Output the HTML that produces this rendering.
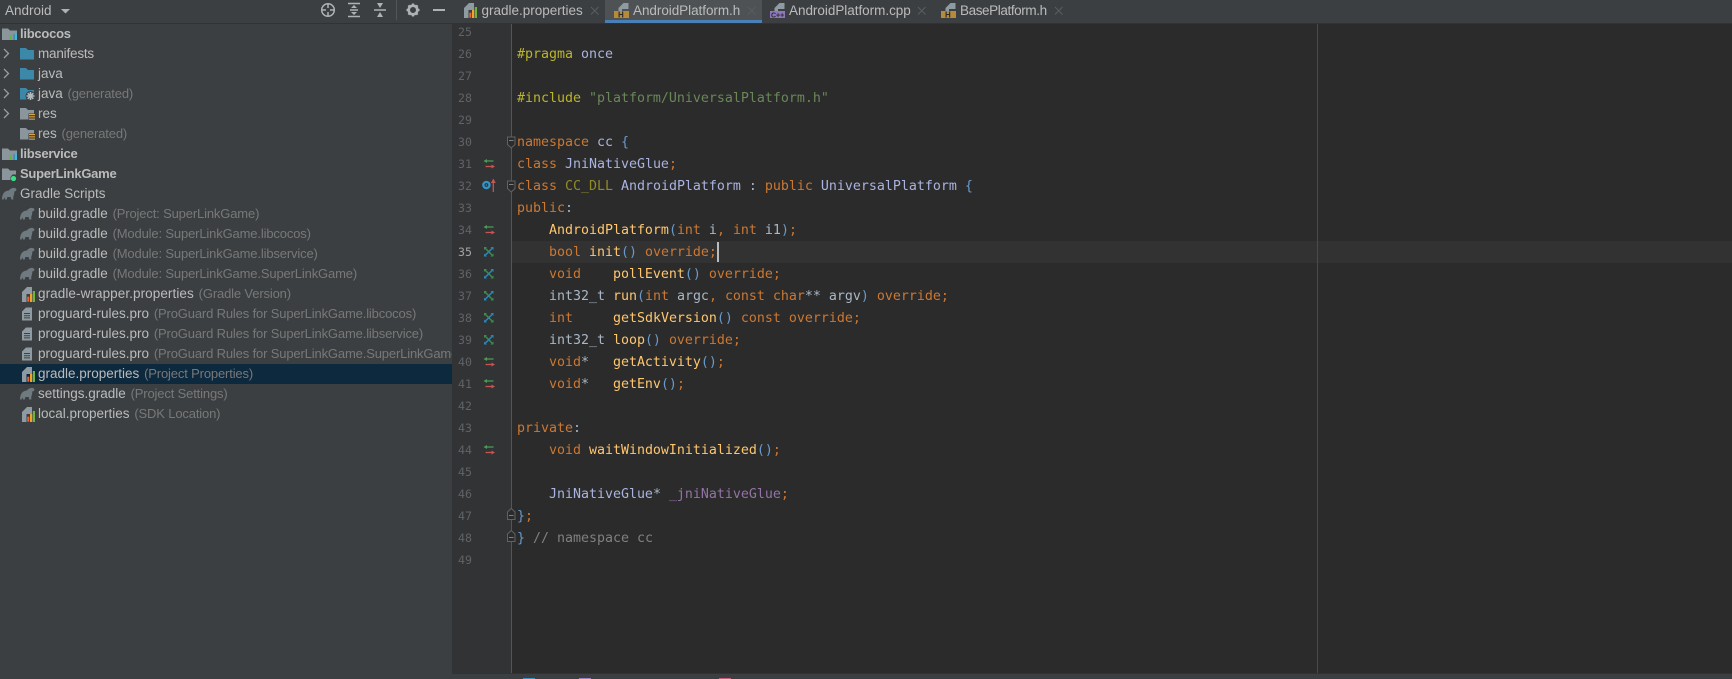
<!DOCTYPE html>
<html><head><meta charset="utf-8"><style>
html,body{margin:0;padding:0;width:1732px;height:679px;overflow:hidden;background:#2b2b2b}
.a{position:absolute;white-space:pre}
#side{position:absolute;left:0;top:0;width:452px;height:679px;background:#3c3f41;overflow:hidden}
#side .r{position:absolute;white-space:pre;height:20px;font:13.5px/20px "Liberation Sans",sans-serif;color:#bbb;transform:translateY(1px)}
#side .r i{font-style:normal;color:#787878;font-size:13px;letter-spacing:-.15px;margin-left:1px}
#side .r b{font-weight:bold;font-size:13px;letter-spacing:-.25px}
.tab{position:absolute;top:0;height:21px;font:13.5px/21px "Liberation Sans",sans-serif;color:#bbb;white-space:pre}
.n{position:absolute;left:452px;width:20px;text-align:right;height:22px;font:11.6px/22px "DejaVu Sans Mono",monospace;color:#606366}
.c{position:absolute;left:517px;white-space:pre;height:22px;font:13.29px/22px "DejaVu Sans Mono",monospace;color:#a9b7c6;transform:translateY(1px)}
.k{color:#cc7832}.f{color:#ffc66d}.t{color:#aab3e0}.p{color:#bbb529}.s{color:#6a8759}.m{color:#908b25}.b{color:#6a9acb}.v{color:#9373a5}.g{color:#808080}
</style></head><body>
<div class="a" style="left:452px;top:24px;width:60px;height:649px;background:#313335"></div>
<div class="a" style="left:512px;top:241px;width:1220px;height:22px;background:#323232"></div>
<div class="a" style="left:511px;top:24px;width:1px;height:649px;background:#555"></div>
<div class="a" style="left:1317px;top:24px;width:1px;height:649px;background:#4a4a4a"></div>
<div class="a" style="left:452px;top:0;width:1280px;height:23px;background:#3c3f41"></div>
<div class="a" style="left:452px;top:23px;width:1280px;height:1px;background:#323232"></div>
<div class="a" style="left:605px;top:0;width:157px;height:20px;background:#4e5254"></div>
<div class="a" style="left:605px;top:20px;width:157px;height:3px;background:#4a80b8"></div>
<div class="a" style="left:452px;top:673px;width:1280px;height:6px;background:#3c3f41;border-top:1px solid #323232;box-sizing:border-box"></div>
<div class="a" style="left:523px;top:678px;width:12px;height:1px;background:#3592c4"></div>
<div class="a" style="left:579px;top:678px;width:12px;height:1px;background:#9a7fc4"></div>
<div class="a" style="left:719px;top:678px;width:12px;height:1px;background:#c75a7e"></div>

<div class="tab" style="left:481.5px">gradle.properties</div>
<div class="tab" style="left:633px;letter-spacing:-.05px">AndroidPlatform.h</div>
<div class="tab" style="left:789px;letter-spacing:-.03px">AndroidPlatform.cpp</div>
<div class="tab" style="left:960px;letter-spacing:-.4px">BasePlatform.h</div>

<div id="side">
<div class="a" style="left:0;top:23px;width:452px;height:1px;background:#323232"></div>
<div class="a" style="left:0;top:364px;width:452px;height:20px;background:#0d293e"></div>
<div class="r" style="left:5px;top:0">Android</div>
<div class="r" style="left:20px;top:23px"><b>libcocos</b></div>
<div class="r" style="left:38px;top:43px;letter-spacing:-.2px">manifests</div>
<div class="r" style="left:38px;top:63px">java</div>
<div class="r" style="left:38px;top:83px">java <i>(generated)</i></div>
<div class="r" style="left:38px;top:103px">res</div>
<div class="r" style="left:38px;top:123px">res <i>(generated)</i></div>
<div class="r" style="left:20px;top:143px"><b>libservice</b></div>
<div class="r" style="left:20px;top:163px"><b>SuperLinkGame</b></div>
<div class="r" style="left:20px;top:183px">Gradle Scripts</div>
<div class="r" style="left:38px;top:203px">build.gradle <i>(Project: SuperLinkGame)</i></div>
<div class="r" style="left:38px;top:223px">build.gradle <i>(Module: SuperLinkGame.libcocos)</i></div>
<div class="r" style="left:38px;top:243px">build.gradle <i>(Module: SuperLinkGame.libservice)</i></div>
<div class="r" style="left:38px;top:263px">build.gradle <i>(Module: SuperLinkGame.SuperLinkGame)</i></div>
<div class="r" style="left:38px;top:283px;letter-spacing:.08px">gradle-wrapper.properties <i>(Gradle Version)</i></div>
<div class="r" style="left:38px;top:303px">proguard-rules.pro <i>(ProGuard Rules for SuperLinkGame.libcocos)</i></div>
<div class="r" style="left:38px;top:323px">proguard-rules.pro <i>(ProGuard Rules for SuperLinkGame.libservice)</i></div>
<div class="r" style="left:38px;top:343px">proguard-rules.pro <i>(ProGuard Rules for SuperLinkGame.SuperLinkGame)</i></div>
<div class="r" style="left:38px;top:363px">gradle.properties <i>(Project Properties)</i></div>
<div class="r" style="left:38px;top:383px">settings.gradle <i>(Project Settings)</i></div>
<div class="r" style="left:38px;top:403px">local.properties <i>(SDK Location)</i></div>
</div>

<div class="n" style="top:21px">25</div><div class="n" style="top:43px">26</div><div class="n" style="top:65px">27</div><div class="n" style="top:87px">28</div><div class="n" style="top:109px">29</div><div class="n" style="top:131px">30</div><div class="n" style="top:153px">31</div><div class="n" style="top:175px">32</div><div class="n" style="top:197px">33</div><div class="n" style="top:219px">34</div><div class="n" style="top:241px;color:#a4a3a3">35</div><div class="n" style="top:263px">36</div><div class="n" style="top:285px">37</div><div class="n" style="top:307px">38</div><div class="n" style="top:329px">39</div><div class="n" style="top:351px">40</div><div class="n" style="top:373px">41</div><div class="n" style="top:395px">42</div><div class="n" style="top:417px">43</div><div class="n" style="top:439px">44</div><div class="n" style="top:461px">45</div><div class="n" style="top:483px">46</div><div class="n" style="top:505px">47</div><div class="n" style="top:527px">48</div><div class="n" style="top:549px">49</div>

<div class="c" style="top:43px"><span class="p">#pragma</span> <span class="t">once</span></div>
<div class="c" style="top:87px"><span class="p">#include</span> <span class="s">"platform/UniversalPlatform.h"</span></div>
<div class="c" style="top:131px"><span class="k">namespace</span> <span class="t">cc</span> <span class="b">{</span></div>
<div class="c" style="top:153px"><span class="k">class</span> <span class="t">JniNativeGlue</span><span class="k">;</span></div>
<div class="c" style="top:175px"><span class="k">class</span> <span class="m">CC_DLL</span> <span class="t">AndroidPlatform</span> : <span class="k">public</span> <span class="t">UniversalPlatform</span> <span class="b">{</span></div>
<div class="c" style="top:197px"><span class="k">public</span>:</div>
<div class="c" style="top:219px">    <span class="f">AndroidPlatform</span><span class="b">(</span><span class="k">int</span> i<span class="k">,</span> <span class="k">int</span> i1<span class="b">)</span><span class="k">;</span></div>
<div class="c" style="top:241px">    <span class="k">bool</span> <span class="f">init</span><span class="b">()</span> <span class="k">override;</span></div>
<div class="c" style="top:263px">    <span class="k">void</span>    <span class="f">pollEvent</span><span class="b">()</span> <span class="k">override;</span></div>
<div class="c" style="top:285px">    int32_t <span class="f">run</span><span class="b">(</span><span class="k">int</span> argc<span class="k">,</span> <span class="k">const char</span>** argv<span class="b">)</span> <span class="k">override;</span></div>
<div class="c" style="top:307px">    <span class="k">int</span>     <span class="f">getSdkVersion</span><span class="b">()</span> <span class="k">const override;</span></div>
<div class="c" style="top:329px">    int32_t <span class="f">loop</span><span class="b">()</span> <span class="k">override;</span></div>
<div class="c" style="top:351px">    <span class="k">void</span>*   <span class="f">getActivity</span><span class="b">()</span><span class="k">;</span></div>
<div class="c" style="top:373px">    <span class="k">void</span>*   <span class="f">getEnv</span><span class="b">()</span><span class="k">;</span></div>
<div class="c" style="top:417px"><span class="k">private</span>:</div>
<div class="c" style="top:439px">    <span class="k">void</span> <span class="f">waitWindowInitialized</span><span class="b">()</span><span class="k">;</span></div>
<div class="c" style="top:483px">    <span class="t">JniNativeGlue</span>* <span class="v">_jniNativeGlue</span><span class="k">;</span></div>
<div class="c" style="top:505px"><span class="b">}</span><span class="k">;</span></div>
<div class="c" style="top:527px"><span class="b">}</span> <span class="g">// namespace cc</span></div>
<div class="a" style="left:717px;top:242px;width:2px;height:20px;background:#bbb"></div>

<svg class="a" style="left:0;top:0" width="1732" height="679" viewBox="0 0 1732 679" xmlns="http://www.w3.org/2000/svg">
<defs>
<g id="module"><path d="M0 0h6l2 2h7v4.500h-1V5.500h-2.600V11.500H0z" fill="#8a959c"/><rect x="7" y="6.500" width="2.300" height="5" fill="#62b543"/><rect x="9.800" y="3.500" width="2" height="8" fill="#8a959c"/><rect x="12.300" y="5.500" width="2.700" height="6" fill="#40b6e0"/></g>
<path id="folderB" d="M0 0h6l2 2h6v9.500H0z" fill="#3c88a8"/>
<path id="folderG" d="M0 0h6l2 2h6v3.500H8.500V11.500H0z" fill="#8a959c"/>
<g id="lines"><rect width="6" height="1.100" y="0" fill="#d9a441"/><rect width="6" height="1.100" y="2.300" fill="#d9a441"/><rect width="6" height="1.100" y="4.600" fill="#d9a441"/></g>
<path id="chev" d="M0 0L4.500 4.500L0 9" fill="none" stroke="#9a9da0" stroke-width="1.300"/>
<path id="ele" d="M0 12.500C0 6.500 3 3.500 7 3.500C8 1.500 11 .5 13 1C15 1.800 14.700 4 13 4.300L12.300 4.500C12.300 7 11.800 8.500 11.300 9.500L11.300 12.500H9.300L8.700 10H5.300L4.800 12.500H3L2.800 10.500C2 10.800 2 11.800 1.500 12.500Z" fill="#6e7a80"/>
<g id="prop"><path d="M5 0H10V7H4.500V15H0V5Z" fill="#8f9ba3"/><rect x="5.300" y="9.700" width="2" height="5" fill="#e8663a"/><rect x="8" y="7" width="2.200" height="8" fill="#f2a32e"/><rect x="10.800" y="4" width="2.200" height="11" fill="#6eb440"/></g>
<g id="doc"><path d="M4 0h6v13H0V4z" fill="#8f9ba3"/><path d="M2 6h6M2 8.200h6M2 10.400h6" stroke="#3c3f41" stroke-width="1"/></g>
<g id="chg"><path d="M3 2H10" stroke="#499c54" stroke-width="1.300"/><path d="M0 2L3.500 0V4Z" fill="#499c54"/><path d="M2 7.500H8.500" stroke="#c75450" stroke-width="1.300"/><path d="M11.500 7.500L8 5.500V9.500Z" fill="#c75450"/></g>
<g id="impl"><path d="M.5 .5L9 9" stroke="#3e8b4f" stroke-width="1.500"/><path d="M9 .5L.5 9" stroke="#2f86b5" stroke-width="1.500"/><path d="M0 0h3L0 3z" fill="#3e8b4f"/><path d="M9.500 9.500h-3l3-3z" fill="#3e8b4f"/><path d="M9.500 0v3l-3-3zM0 9.500v-3l3 3z" fill="#2f86b5"/></g>
<g id="foldD"><path d="M.5 .5H8V8L4.250 11.500L.5 8Z" fill="#2b2b2b" stroke="#606366"/><path d="M2 4H6.500" stroke="#808080"/></g>
<g id="foldU"><path d="M.5 11.500H8V4L4.250 .5L.5 4Z" fill="#2b2b2b" stroke="#606366"/><path d="M2 7.500H6.500" stroke="#808080"/></g>
<path id="x" d="M0 0L7.500 7.500M7.500 0L0 7.500" stroke="#5a5d5f" stroke-width="1" fill="none"/>
<g id="hdr"><path d="M5 0H10V6H3.500V8H0V5Z" fill="#8f9ba3" transform="translate(2.500,0)"/></g>
</defs>

<!-- toolbar -->
<path d="M57 9h9l-4.500 4.500z" fill="#afb1b3" transform="translate(4,0)"/>
<g fill="none" stroke="#afb1b3">
<circle cx="328" cy="10" r="6.300" stroke-width="1.500"/>
<path d="M328 4.500V8M328 12V15.500M322.500 10H326M330 10H333.500" stroke-width="1.500"/>
<path d="M348 3.500H360M348 16.500H360M350 10H358" stroke-width="1.500"/>
<path d="M374 10H386" stroke-width="1.500"/>
<path d="M433 10H445" stroke-width="2"/>
</g>
<g fill="#afb1b3">
<path d="M354 5L351 8H357ZM354 15L351 12H357Z"/>
<path d="M380 8L377 3H383ZM380 12L377 17H383Z"/>
</g>
<rect x="396" y="0" width="1" height="20" fill="#515658"/>
<circle cx="413" cy="10" r="4.300" fill="none" stroke="#afb1b3" stroke-width="2.600"/>
<path d="M413 3.500V16.500M406.500 10H419.500M408.400 5.400L417.600 14.600M417.600 5.400L408.400 14.600" stroke="#afb1b3" stroke-width="2.200" stroke-dasharray="2 9"/>

<!-- tree icons -->
<use href="#module" x="2" y="28.500"/>
<use href="#chev" x="4" y="49"/><use href="#chev" x="4" y="69"/><use href="#chev" x="4" y="89"/><use href="#chev" x="4" y="109"/>
<use href="#folderB" x="20" y="48"/><use href="#folderB" x="20" y="68"/><use href="#folderB" x="20" y="88"/>
<circle cx="30.500" cy="96" r="5" fill="#3c3f41"/><path d="M30.500 92v8M26.500 96h8M27.700 93.200l5.600 5.600M33.300 93.200l-5.600 5.600" stroke="#aeb9c0" stroke-width="1.600"/>
<use href="#folderG" x="20" y="108"/><use href="#lines" x="29" y="114"/>
<use href="#folderG" x="20" y="128"/><use href="#lines" x="29" y="134"/>
<use href="#module" x="2" y="148.500"/>
<path d="M2 168.500h6l2 2h6v4h-3.500l-2 2.500v3H2z" fill="#8a959c"/><circle cx="13.500" cy="178.500" r="2.600" fill="#3ddc84"/>
<use href="#ele" x="2" y="187"/>
<use href="#ele" x="20" y="207"/><use href="#ele" x="20" y="227"/><use href="#ele" x="20" y="247"/><use href="#ele" x="20" y="267"/>
<use href="#prop" x="22" y="287"/>
<use href="#doc" x="22" y="307.500"/><use href="#doc" x="22" y="327.500"/><use href="#doc" x="22" y="347.500"/>
<use href="#prop" x="22" y="367"/>
<use href="#ele" x="20" y="387"/>
<use href="#prop" x="22" y="407"/>

<!-- tab icons -->
<use href="#prop" x="464" y="3"/>
<use href="#x" x="591" y="7"/><use href="#x" x="748" y="7"/><use href="#x" x="918" y="7"/><use href="#x" x="1055" y="7"/>
<use href="#hdr" x="616" y="3"/><rect x="614" y="11" width="15" height="7" fill="#b58a3a"/><text x="618" y="17.700" font-family="Liberation Sans,sans-serif" font-size="8" font-weight="bold" fill="#2b2b2b">H</text>
<use href="#hdr" x="772" y="3"/><rect x="770" y="11" width="15" height="7" fill="#8f75bd"/><text x="771" y="17.500" font-family="Liberation Sans,sans-serif" font-size="7" font-weight="bold" fill="#2b2b2b">C++</text>
<use href="#hdr" x="943" y="3"/><rect x="941" y="11" width="15" height="7" fill="#b58a3a"/><text x="945" y="17.700" font-family="Liberation Sans,sans-serif" font-size="8" font-weight="bold" fill="#2b2b2b">H</text>

<!-- gutter -->
<use href="#chg" x="483.500" y="159"/><use href="#chg" x="483.500" y="225"/><use href="#chg" x="483.500" y="357"/><use href="#chg" x="483.500" y="379"/><use href="#chg" x="483.500" y="445"/>
<circle cx="486.400" cy="185" r="3.100" fill="none" stroke="#3592c4" stroke-width="2.400"/><circle cx="486.400" cy="185" r=".8" fill="#3592c4"/>
<path d="M493.300 192V181" stroke="#c75450" stroke-width="1.300"/><path d="M493.300 178.500L490.800 183H495.800Z" fill="#c75450"/>
<use href="#impl" x="484" y="247"/><use href="#impl" x="484" y="269"/><use href="#impl" x="484" y="291"/><use href="#impl" x="484" y="313"/><use href="#impl" x="484" y="335"/>
<use href="#foldD" x="507" y="136.500"/><use href="#foldD" x="507" y="180.500"/>
<use href="#foldU" x="507" y="508"/><use href="#foldU" x="507" y="530"/>
</svg>
</body></html>
